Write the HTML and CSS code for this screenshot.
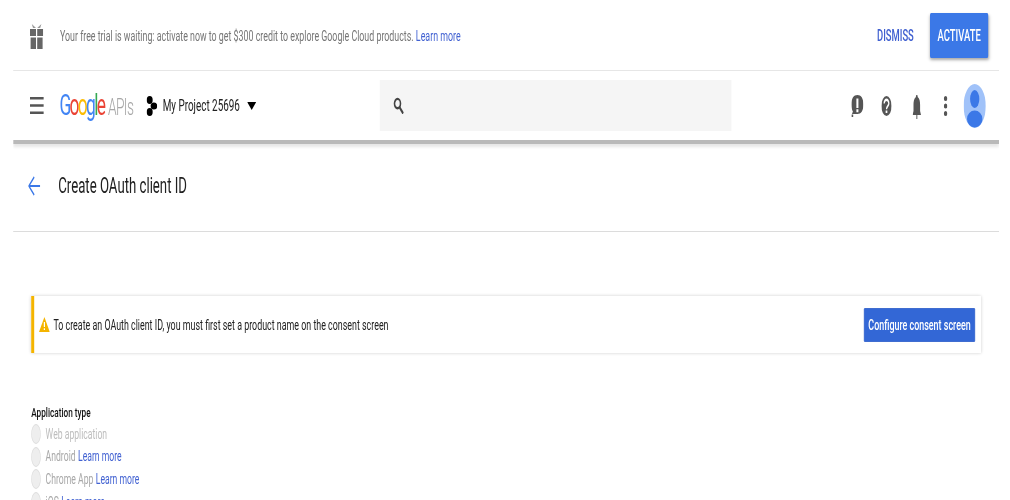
FILE: index.html
```html
<!DOCTYPE html>
<html lang="en">
<head>
<meta charset="utf-8">
<title>Create OAuth client ID</title>
<link rel="stylesheet" href="styles.css">
</head>
<body>
<div class="stage">
  <section class="banner">
    <svg class="gift" viewBox="0 0 22 25" preserveAspectRatio="none"><path fill="#666" d="M0 5h10v7H0zM12 5h10v7H12zM1 13.500h9V25H1zM12 13.500h9V25h-9z"/><path fill="#999" d="M3 0l7 4H5zM19 0l-7 4h5z"/></svg>
    <p class="trial">Your free trial is waiting: activate now to get $300 credit to explore Google Cloud products. <a class="link" href="#">Learn more</a></p>
    <a class="dismiss" href="#">DISMISS</a>
    <button class="activate">ACTIVATE</button>
  </section>
  <header class="toolbar">
    <svg class="menu" viewBox="0 0 24 17" preserveAspectRatio="none"><path fill="#555" d="M0 0h24v2.4H0zM0 7.3h24v2.4H0zM0 14.6h24V17H0z"/></svg>
    <div class="logo"><span class="b">G</span><span class="r">o</span><span class="y">o</span><span class="b">g</span><span class="g">l</span><span class="r">e</span><span class="apis">APIs</span></div>
    <svg class="dots" viewBox="0 0 18 20" preserveAspectRatio="none"><ellipse cx="5.500" cy="4" rx="5" ry="4"/><ellipse cx="12.500" cy="10" rx="5.500" ry="3.600"/><ellipse cx="5.500" cy="16" rx="5" ry="4"/></svg>
    <span class="project">My Project 25696</span>
    <svg class="caret" viewBox="0 0 16 9" preserveAspectRatio="none"><path d="M0 0h16L8 9z"/></svg>
    <div class="search">
      <svg class="mag" viewBox="0 0 18 18" preserveAspectRatio="none"><circle cx="7.500" cy="7" r="5" fill="none" stroke="#444" stroke-width="2.600"/><path stroke="#444" stroke-width="3" d="M11 11l6 6.500"/></svg>
    </div>
    <div class="actions">
      <svg class="act a1" viewBox="0 0 20 22" preserveAspectRatio="none"><path fill="#555" d="M10 0c6 0 10 3 10 9.500S16 19 10 19H1l1.500-2.500C1 15 0 12.500 0 9.500 0 3 4 0 10 0zM0 19.500h3V22H0z"/><path fill="#fff" d="M8.300 3.500h3.400v9.500H8.300zM8.300 14.200h3.400v3H8.300z"/></svg>
      <svg class="act a2" viewBox="0 0 24 24" preserveAspectRatio="none"><ellipse cx="12" cy="12" rx="12" ry="12" fill="#555"/><path fill="none" stroke="#fff" stroke-width="3" d="M6.500 9c0-6 11-6 11 0 0 3-5.500 3-5.500 7"/><path fill="#fff" d="M10 17.500h4v3h-4z"/></svg>
      <svg class="act a3" viewBox="0 0 14 24" preserveAspectRatio="none"><path fill="#555" d="M7 0c1 0 1.500.5 1.500 2C12 3.500 12.500 7 12.500 10v6l1.500 4H0l1.500-4v-6C1.500 7 2 3.500 5.500 2 5.500.5 6 0 7 0z"/><path fill="#777" d="M6 20h2v4H6z"/></svg>
      <svg class="act a4" viewBox="0 0 6 24" preserveAspectRatio="none"><circle cx="3" cy="3" r="3" fill="#555"/><circle cx="3" cy="12" r="3" fill="#555"/><circle cx="3" cy="21" r="3" fill="#555"/></svg>
      <svg class="avatar" viewBox="0 0 36 44" preserveAspectRatio="none"><ellipse cx="18" cy="22" rx="18" ry="22" fill="#a0c2f9"/><ellipse cx="18" cy="15" rx="7.500" ry="9" fill="#3b78e7"/><ellipse cx="18" cy="35" rx="12.500" ry="8.500" fill="#3b78e7"/></svg>
    </div>
  </header>
  <div class="title-row">
    <svg class="back" viewBox="0 0 20 20" preserveAspectRatio="none"><path fill="none" stroke="#3b78e7" stroke-width="1.800" d="M20 10H2M10 1l-9 9 9 9"/></svg>
    <h1 class="title">Create OAuth client ID</h1>
  </div>
  <main class="content">
    <div class="alert">
      <svg class="warn" viewBox="0 0 18 18" preserveAspectRatio="none"><path fill="#f4b400" d="M9 0l9 18H0z"/><path fill="#fff" d="M8 6h2v6H8zM8 13.500h2v2H8z"/></svg>
      <span class="alert-text">To create an OAuth client ID, you must first set a product name on the consent screen</span>
      <button class="configure">Configure consent screen</button>
    </div>
    <form class="form">
      <div class="label">Application type</div>
      <div class="radio"><i class="dot"></i><span class="off">Web application</span></div>
      <div class="radio"><i class="dot"></i><span class="mid">Android</span> <a class="link" href="#">Learn more</a></div>
      <div class="radio"><i class="dot"></i><span class="mid">Chrome App</span> <a class="link" href="#">Learn more</a></div>
      <div class="radio"><i class="dot"></i><span class="mid">iOS</span> <a class="link" href="#">Learn more</a></div>
    </form>
  </main>
</div>
</body>
</html>
```
FILE: styles.css
```css
html, body {
  margin: 0;
  padding: 0;
  height: 500px;
  overflow: hidden;
  background: #fff;
}
.stage {
  width: 1683px;
  height: 500px;
  box-sizing: border-box;
  padding: 0 18px 0 22px;
  overflow: hidden;
  transform: scaleX(0.6);
  transform-origin: 0 0;
  filter: blur(0.4px);
  font-family: Roboto, "Liberation Sans", sans-serif;
  color: #212121;
}
svg { display: block; flex: none; }
a { text-decoration: none; }
.link { color: #4262d2; }

.banner {
  height: 70px;
  display: flex;
  align-items: center;
  padding: 0 18px 0 28px;
  border-bottom: 1px solid #e6e6e6;
}
.gift { width: 22px; height: 25px; margin: 3px 0 0; }
.trial { margin: 2px 0 0 28px; flex: 1; font-size: 14.75px; color: #757575; }
.dismiss { font-size: 15.7px; font-weight: 500; color: #3f5fd0; margin-right: 27px; }
.activate {
  width: 97px;
  height: 45px;
  border: 0;
  border-radius: 2px;
  background: #3b78e7;
  color: #fff;
  font: 500 15.8px Roboto, sans-serif;
  box-shadow: 0 2px 4px rgba(0, 0, 0, .35);
}

.toolbar {
  height: 69px;
  display: flex;
  align-items: center;
  padding: 0 22px 0 28px;
  box-shadow: 0 4px 0 #b9b9b9, 0 7px 4px rgba(0, 0, 0, .1);
  clip-path: inset(0 0 -12px 0);
  position: relative;
}
.menu { width: 23px; height: 17px; }
.logo { margin-left: 26px; font-size: 29px; letter-spacing: -2.8px; line-height: 1; }
.b { color: #4285f4; }
.r { color: #ea4335; }
.y { color: #fbbc05; }
.g { color: #34a853; }
.apis { color: #a6a6a6; margin-left: 6px; font-size: 23px; font-weight: 300; letter-spacing: -1px; }
.dots { width: 18px; height: 20px; margin-left: 22px; }
.project { margin-left: 9px; font-size: 16.5px; color: #212121; }
.caret { width: 15px; height: 8px; margin-left: 12px; }
.search {
  position: absolute;
  left: 611px;
  top: 9px;
  width: 586px;
  height: 51px;
  display: flex;
  align-items: center;
  background: #f5f5f5;
}
.mag { width: 18px; height: 17px; margin-left: 22px; }
.actions { margin-left: auto; display: flex; align-items: center; }
.act { height: 20px; }
.a1 { width: 20px; height: 22px; margin-top: 1px; }
.a2 { width: 17px; margin-left: 30px; }
.a3 { width: 14px; height: 24px; margin-left: 35px; margin-top: 2px; }
.a4 { width: 6px; height: 20px; margin-left: 38px; }
.avatar { width: 37px; height: 44px; margin-left: 27px; }

.title-row {
  height: 92px;
  display: flex;
  align-items: center;
  padding-left: 25px;
  border-bottom: 1px solid #dcdcdc;
  box-sizing: border-box;
}
.back { width: 20px; height: 20px; }
.title { margin: 0 0 0 30px; font-size: 22px; font-weight: 400; color: #212121; }

.content { padding: 64px 0 0 30px; }
.alert {
  width: 1583px;
  height: 57px;
  box-sizing: border-box;
  display: flex;
  align-items: center;
  padding: 0 10px 0 8px;
  border-left: 5px solid #f4b400;
  box-shadow: 0 0 4px rgba(0, 0, 0, .2);
}
.warn { width: 18px; height: 15px; }
.alert-text { margin-left: 6px; flex: 1; font-size: 14.8px; }
.configure {
  width: 185px;
  height: 34px;
  border: 1px solid #2a5cc9;
  border-radius: 1px;
  background: #3367d6;
  color: #fff;
  font: 500 14.9px Roboto, sans-serif;
}

.form { margin-top: 52px; font-size: 14.4px; }
.label { height: 18px; line-height: 15px; font-size: 13.7px; font-weight: 500; color: #111; }
.radio {
  height: 22.6px;
  display: flex;
  align-items: center;
  gap: 4px;
}
.dot {
  width: 16px;
  height: 20px;
  margin-right: 4px;
  box-sizing: border-box;
  border: 1px solid #ddd;
  border-radius: 50%;
  background: #eee;
  flex: none;
}
.off { color: #bdbdbd; }
.mid { color: #a8a8a8; }
```
